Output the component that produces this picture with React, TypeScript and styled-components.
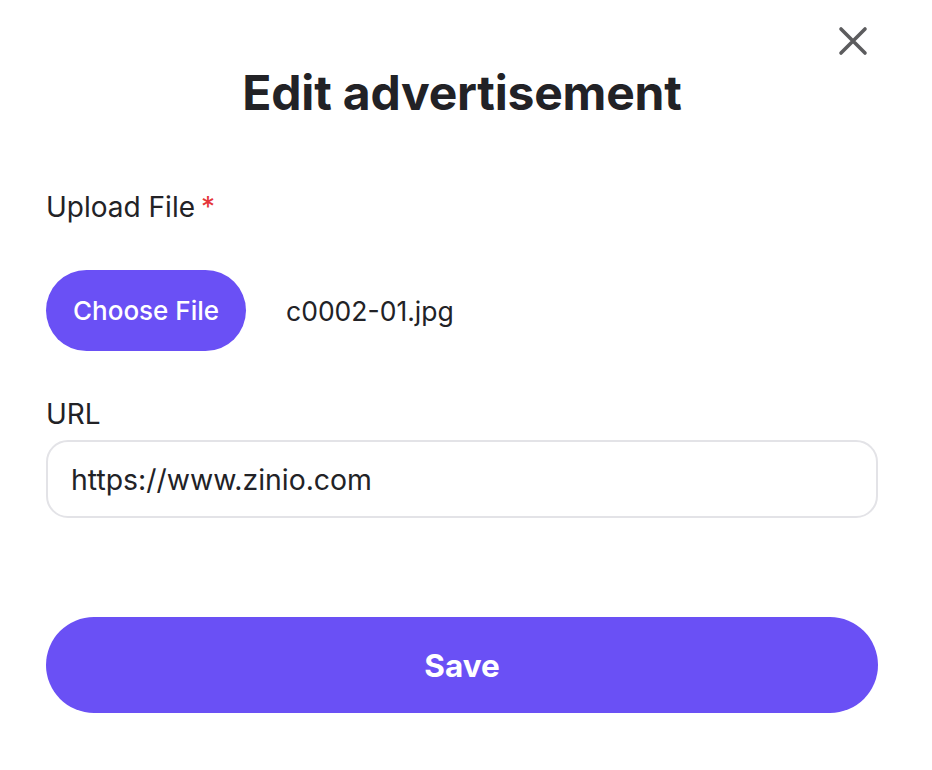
import * as React from 'react';
import styled, { createGlobalStyle } from 'styled-components';

const GlobalStyle = createGlobalStyle`
  html, body {
    margin: 0;
    padding: 0;
    background: #ffffff;
  }
  body {
    font-family: Inter, "Noto Sans", "Liberation Sans", sans-serif;
    color: #222226;
  }
`;

const Modal = styled.div`
  position: relative;
  display: flex;
  flex-direction: column;
  width: 932px;
  height: 770px;
  box-sizing: border-box;
  padding: 64px 54px 0 46px;
`;

const CloseButton = styled.button`
  position: absolute;
  top: 26px;
  right: 64px;
  width: 30px;
  height: 30px;
  padding: 0;
  border: none;
  background: transparent;
  display: flex;
  align-items: center;
  justify-content: center;
  cursor: pointer;
`;

const Title = styled.h1`
  margin: 0;
  font-size: 48px;
  line-height: 58px;
  font-weight: 700;
  text-align: center;
  color: #222226;
  letter-spacing: -0.2px;
`;

const Label = styled.label<{ $gap: number }>`
  display: block;
  margin-top: ${props => props.$gap}px;
  font-size: 28px;
  line-height: 34px;
  font-weight: 400;
  color: #222226;
`;

const Required = styled.span`
  color: #e5353b;
  margin-left: 6px;
`;

const FileRow = styled.div`
  display: flex;
  align-items: center;
  gap: 40px;
  margin-top: 46px;
`;

const ChooseButton = styled.button`
  height: 81px;
  padding: 0 27px;
  border: none;
  border-radius: 41px;
  background: #6a50f5;
  color: #ffffff;
  font-family: inherit;
  font-size: 26px;
  font-weight: 500;
  cursor: pointer;
`;

const FileName = styled.span`
  font-size: 26.5px;
  color: #222226;
`;

const UrlInput = styled.input`
  margin-top: 9px;
  height: 78px;
  box-sizing: border-box;
  padding: 0 23px;
  border: 2px solid #e3e3e7;
  border-radius: 22px;
  font-family: inherit;
  font-size: 28.4px;
  color: #222226;
  outline: none;
`;

const SaveButton = styled.button`
  margin-top: 99px;
  height: 96px;
  border: none;
  border-radius: 48px;
  background: #6a50f5;
  color: #ffffff;
  font-family: inherit;
  font-size: 31.5px;
  font-weight: 700;
  cursor: pointer;
`;

const CloseIcon = () => (
  <svg width="30" height="30" viewBox="0 0 30 30">
    <path
      d="M3 3 L27 27 M27 3 L3 27"
      stroke="#5c5c5e"
      strokeWidth="3.6"
      strokeLinecap="round"
    />
  </svg>
);

const App: React.FC = () => {
  const [url, setUrl] = React.useState('https://www.zinio.com');
  return (
    <Modal>
      <GlobalStyle />
      <CloseButton aria-label="Close">
        <CloseIcon />
      </CloseButton>
      <Title>Edit advertisement</Title>
      <Label $gap={68}>
        Upload File<Required>*</Required>
      </Label>
      <FileRow>
        <ChooseButton>Choose File</ChooseButton>
        <FileName>c0002-01.jpg</FileName>
      </FileRow>
      <Label $gap={46}>URL</Label>
      <UrlInput value={url} onChange={e => setUrl(e.target.value)} />
      <SaveButton>Save</SaveButton>
    </Modal>
  );
};

export default App;
